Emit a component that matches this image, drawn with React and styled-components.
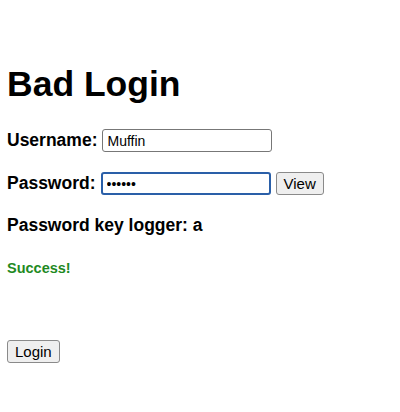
import React, { useState } from 'react';
import styled, { createGlobalStyle } from 'styled-components';

const GlobalStyle = createGlobalStyle`
    body {
        margin: 0;
        background: #ffffff;
        font-family: "Liberation Sans", Arial, sans-serif;
        color: #000000;
    }
`;

export default function App() {
    const [username, setUsername] = useState('Muffin');
    const [password, setPassword] = useState('abcdef');

    return (
        <Page>
            <GlobalStyle />
            <Title>Bad Login</Title>
            <Field>
                <Label>Username:</Label>
                <TextInput value={username} onChange={(e) => setUsername(e.target.value)} />
            </Field>
            <Field>
                <Label>Password:</Label>
                <TextInput type="password" focused value={password} onChange={(e) => setPassword(e.target.value)} />
                <Button>View</Button>
            </Field>
            <Logger>Password key logger: a</Logger>
            <Status>Success!</Status>
            <Footer>
                <Button>Login</Button>
            </Footer>
        </Page>
    );
}

const Page = styled.div`
    padding: 64px 7px 0;
    height: 412px;
    box-sizing: border-box;
`;

const Title = styled.h1`
    margin: 0 0 25px;
    font-size: 35.5px;
    font-weight: bold;
    line-height: 40px;
`;

const Field = styled.div`
    display: flex;
    align-items: center;
    gap: 5px;
    margin-bottom: 20px;
`;

const Label = styled.span`
    font-size: 17.5px;
    font-weight: bold;
`;

const TextInput = styled.input`
    width: 170px;
    height: 23px;
    box-sizing: border-box;
    padding: 1px 4px;
    font-family: "Liberation Sans", Arial, sans-serif;
    font-size: 14px;
    color: #000;
    background: #fff;
    border: ${(p) => (p.focused ? '2px solid #2a5fa8' : '1px solid #777')};
    border-radius: 3px;
    outline: none;
`;

const Button = styled.button`
    height: 23px;
    padding: 0 7px;
    font-family: "Liberation Sans", Arial, sans-serif;
    font-size: 15px;
    color: #000;
    background: #efefef;
    border: 1px solid #8a8a8a;
    border-radius: 3px;
`;

const Logger = styled.div`
    margin-top: 9px;
    font-size: 17.5px;
    font-weight: bold;
`;

const Status = styled.div`
    margin-top: 24px;
    font-size: 14.5px;
    font-weight: bold;
    color: #1f8a1f;
`;

const Footer = styled.div`
    margin-top: 64px;
`;
